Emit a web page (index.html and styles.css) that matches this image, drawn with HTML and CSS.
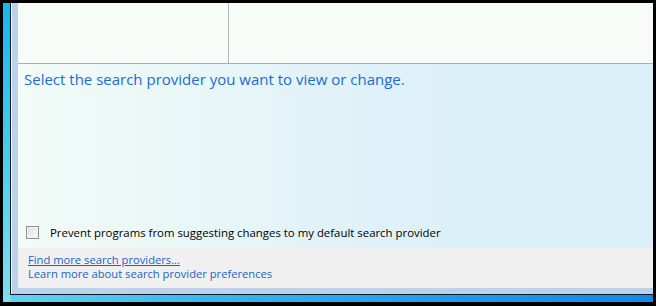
FILE: index.html
```html
<!DOCTYPE html>
<html lang="en">
<head>
  <meta charset="UTF-8">
  <title>Manage Add-ons - Search Providers</title>
  <link rel="stylesheet" href="styles.css">
</head>
<body>
  <div class="screen">
    <div class="glass">
      <div class="win-edge">
        <div class="frame">
          <div class="dialog">

            <!-- list header area (cut off at top) -->
            <div class="list-top">
              <div class="list-col-first"></div>
              <div class="list-col"></div>
            </div>

            <!-- details pane -->
            <div class="details">
              <p class="prompt">Select the search provider you want to view or change.</p>
              <label class="check-row">
                <span class="checkbox"></span>
                <span>Prevent programs from suggesting changes to my default search provider</span>
              </label>
            </div>

            <!-- footer links -->
            <div class="footer">
              <a href="#" class="link link-under">Find more search providers...</a>
              <a href="#" class="link">Learn more about search provider preferences</a>
            </div>

          </div>
        </div>
      </div>
    </div>
  </div>
</body>
</html>
```

FILE: styles.css
```css
html, body { margin: 0; padding: 0; background: #000; }
body { font-family: "Open Sans", "Noto Sans", "DejaVu Sans", sans-serif; }

.screen { width: 656px; height: 306px; box-sizing: border-box; padding: 3px 3px 4px 3px; background: #000; display: flex; }
.glass {
  flex: 1; display: flex; padding: 0 0 7px 7px;
  background: linear-gradient(180deg, #17b6ee 0%, #4ccfee 55%, #7fe0f0 100%);
  position: relative;
}
.glass::after {
  content: ""; position: absolute; left: 8px; right: 0; bottom: 0; height: 7px;
  background: linear-gradient(90deg, #62d3ef 0%, #3cb6ef 30%, #1e9aeb 70%, #1588e6 100%);
}
.win-edge { flex: 1; display: flex; border-left: 1px solid #0b1a24; border-bottom: 1px solid #0b1a24; }
.frame { flex: 1; display: flex; padding: 0 0 6px 7px; background: #bcd1ea; box-shadow: inset 1px 0 0 #f4f8fc; }
.dialog { flex: 1; display: flex; flex-direction: column; }

.list-top { height: 60px; display: flex; background: #f7fcf8; border-bottom: 1px solid #aab0ae; }
.list-col-first { width: 210px; flex: none; border-right: 1px solid #b4b8b6; }
.list-col { flex: 1; }

.details {
  flex: 1; display: flex; flex-direction: column; justify-content: space-between;
  padding: 0 0 8px 6px;
  background: linear-gradient(90deg, #f2fbf7 0%, #ecf8f7 20%, #e2f3f8 45%, #dcf0f9 70%, #dbeff9 100%);
}
.prompt { margin: 5px 0 0; font-size: 15px; line-height: 20px; color: #1d6bd0; }

.check-row { display: flex; align-items: center; gap: 11px; padding-left: 2px; font-size: 11.4px; color: #000; }
.checkbox {
  width: 11px; height: 11px; border: 1px solid #8e8f8f;
  background: linear-gradient(135deg, #d9dbdc 0%, #eef0f1 60%, #f8f9fa 100%);
  box-shadow: inset 0 0 0 1px #f4f4f4;
}

.footer { height: 40px; box-sizing: border-box; padding: 5px 0 0 10px; background: #f0f0f0; display: flex; flex-direction: column; align-items: flex-start; }
.link { display: block; font-size: 11.2px; line-height: 14px; color: #1a64c8; text-decoration: none; }
.link-under { text-decoration: underline; }
```
